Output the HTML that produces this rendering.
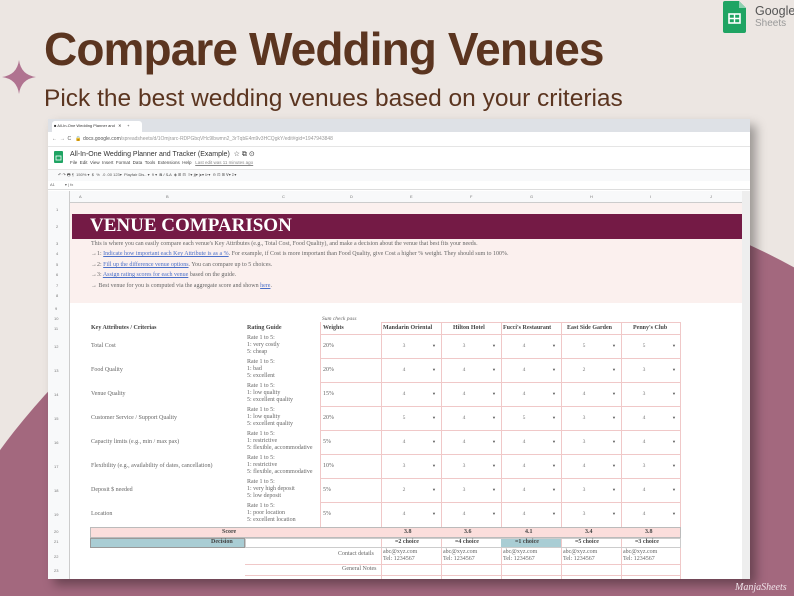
<!DOCTYPE html>
<html><head><meta charset="utf-8"><style>
*{margin:0;padding:0;box-sizing:border-box}
html,body{width:794px;height:596px;overflow:hidden}
body{background:#ece6e2;position:relative;font-family:"Liberation Serif",serif}
.clip{position:absolute;left:0;top:0;width:794px;height:596px;overflow:hidden}
.blob{position:absolute;left:-129px;top:191px;width:1258px;height:1318px;border-radius:50%;background:#a3687e}
.a{position:absolute;white-space:nowrap}
.t{left:44px;top:22px;font:bold 46px "Liberation Sans",sans-serif;color:#5b3520;letter-spacing:-0.9px}
.s{left:44px;top:85px;font:24.5px "Liberation Sans",sans-serif;color:#5b3520}
.win{position:absolute;left:48px;top:119px;width:702px;height:460px;background:#fff;box-shadow:6px 6px 10px rgba(0,0,0,.35);overflow:hidden}
.c{position:absolute;font-size:6px;color:#666;white-space:nowrap;line-height:7px}
.v{position:absolute;font-size:5.5px;color:#777;text-align:center;width:40px;line-height:24px}
.ar{position:absolute;font-size:4px;color:#555;line-height:24px}
.hr{position:absolute;height:1px;background:#f0c8c8}
.vr{position:absolute;width:1px;background:#f0c8c8}
.rn{position:absolute;font:4px "Liberation Sans",sans-serif;color:#777}
</style></head><body>
<div class="clip"><div class="blob"></div></div>
<svg class="a" style="left:2px;top:60px" width="34" height="34" viewBox="0 0 34 34"><path d="M17 0 Q19 15 34 17 Q19 19 17 34 Q15 19 0 17 Q15 15 17 0Z" fill="#b07390"/></svg>
<div class="a t">Compare Wedding Venues</div>
<div class="a s">Pick the best wedding venues based on your criterias</div>
<svg class="a" style="left:723px;top:1px" width="24" height="32"><path d="M2 0h14l7 7v23a2 2 0 0 1-2 2H2a2 2 0 0 1-2-2V2a2 2 0 0 1 2-2z" fill="#1fa463"/><path d="M16 0v7h7z" fill="#8ed1b1"/><rect x="6" y="13" width="11" height="9" fill="none" stroke="#fff" stroke-width="1.6"/><path d="M6 17.5h11M11.5 13v9" stroke="#fff" stroke-width="1.4"/></svg>
<div class="a" style="left:755px;top:4px;font:12.5px 'Liberation Sans',sans-serif;color:#555">Google</div>
<div class="a" style="left:755px;top:18px;font:10px 'Liberation Sans',sans-serif;color:#999">Sheets</div>

<div class="win">
 <div style="position:absolute;left:0;top:0;width:702px;height:13px;background:#dee1e6"></div>
 <div style="position:absolute;left:4px;top:2px;width:90px;height:11px;background:#fff;border-radius:3px 3px 0 0"></div>
 <div class="c" style="left:6px;top:4px;font:4px 'Liberation Sans';color:#333">■ All-In-One Wedding Planner and &nbsp;&nbsp;✕ &nbsp;&nbsp;&nbsp;&nbsp;+</div>
 <div class="c" style="left:0;top:13px;width:702px;height:15px;background:#fff;border-bottom:1px solid #e5e5e5"></div>
 <div class="c" style="left:4px;top:17px;font:5px 'Liberation Sans';color:#555">← &nbsp;→ &nbsp;C &nbsp;&nbsp;🔒 docs.google.com<span style="color:#999">/spreadsheets/d/1Omjrarc-RDPGbqVHc9lbwmn2_3rTqbE4m9v3HCQgkY/edit#gid=1947943848</span></div>
 <svg style="position:absolute;left:6px;top:32px" width="9" height="12"><rect width="9" height="12" rx="1" fill="#1fa463"/><rect x="2" y="5" width="5" height="4" fill="none" stroke="#fff" stroke-width=".8"/></svg>
 <div class="c" style="left:22px;top:31px;font:7px 'Liberation Sans';color:#333">All-In-One Wedding Planner and Tracker (Example) &nbsp;☆ ⧉ ⊙</div>
 <div class="c" style="left:22px;top:41px;font:4.5px 'Liberation Sans';color:#444">File &nbsp;Edit &nbsp;View &nbsp;Insert &nbsp;Format &nbsp;Data &nbsp;Tools &nbsp;Extensions &nbsp;Help &nbsp;&nbsp;<u style="color:#888">Last edit was 11 minutes ago</u></div>
 <div style="position:absolute;left:0;top:50px;width:702px;height:12px;background:#f8f9fa;border-top:1px solid #e5e5e5"></div>
 <div class="c" style="left:10px;top:53px;font:4px 'Liberation Sans';color:#555">↶ ↷ 🖶 ¶ &nbsp;150% ▾ &nbsp;$ &nbsp;% &nbsp;.0 .00 123▾ &nbsp;Playfair Dis.. ▾ &nbsp;9 ▾ &nbsp;<b>B</b> <i>I</i> S̶ A &nbsp;◈ ⊞ ⊟ &nbsp;≡▾ ⫫▾ |▸▾ ⊳▾ &nbsp;⊖ ⊡ ⊞ ∀▾ Σ▾</div>
 <div style="position:absolute;left:0;top:62px;width:702px;height:9px;border-bottom:1px solid #ddd;background:#fff"></div>
 <div class="c" style="left:2px;top:63px;font:4px 'Liberation Sans'">A1 &nbsp;&nbsp;&nbsp;&nbsp;&nbsp;&nbsp;&nbsp;&nbsp;▾ | fx</div>
 <div style="position:absolute;left:0;top:72px;width:702px;height:12px;background:#f8f9fa;border-bottom:1px solid #ccc"></div>
 <div style="position:absolute;left:0;top:72px;width:22px;height:388px;background:#f8f9fa;border-right:1px solid #ccc"></div>
 <div class="rn" style="top:75px;left:31px">A</div>
 <div class="rn" style="top:75px;left:118px">B</div>
 <div class="rn" style="top:75px;left:234px">C</div>
 <div class="rn" style="top:75px;left:302px">D</div>
 <div class="rn" style="top:75px;left:362px">E</div>
 <div class="rn" style="top:75px;left:422px">F</div>
 <div class="rn" style="top:75px;left:482px">G</div>
 <div class="rn" style="top:75px;left:542px">H</div>
 <div class="rn" style="top:75px;left:602px">I</div>
 <div class="rn" style="top:75px;left:662px">J</div>
 <div style="position:absolute;left:22px;top:84px;width:672px;height:100px;background:#fbf0ee"></div>
 <div style="position:absolute;left:24px;top:95px;width:670px;height:25px;background:#741a45"></div>
 <div class="c" style="left:42px;top:97px;font:bold 19px 'Liberation Serif',serif;color:#fff;line-height:20px">VENUE COMPARISON</div>
 <div class="c" style="left:43px;top:122px">This is where you can easily compare each venue's Key Attributes (e.g., Total Cost, Food Quality), and make a decision about the venue that best fits your needs.</div>
 <div class="c" style="left:43px;top:132px">→1: <u style="color:#4a6fc8">Indicate how important each Key Attribute is as a %</u>. For example, if Cost is more important than Food Quality, give Cost a higher % weight. They should sum to 100%.</div>
 <div class="c" style="left:43px;top:143px">→2: <u style="color:#4a6fc8">Fill up the difference venue options</u>. You can compare up to 5 choices.</div>
 <div class="c" style="left:43px;top:153px">→3: <u style="color:#4a6fc8">Assign rating scores for each venue</u> based on the guide.</div>
 <div class="c" style="left:43px;top:164px">→ Best venue for you is computed via the aggregate score and shown <u style="color:#4a6fc8">here</u>.</div>
 <div class="rn" style="left:8px;top:88px">1</div>
 <div class="rn" style="left:8px;top:105px">2</div>
 <div class="rn" style="left:8px;top:122px">3</div>
 <div class="rn" style="left:8px;top:132px">4</div>
 <div class="rn" style="left:8px;top:143px">5</div>
 <div class="rn" style="left:8px;top:153px">6</div>
 <div class="rn" style="left:8px;top:164px">7</div>
 <div class="rn" style="left:8px;top:174px">8</div>
 <div class="rn" style="left:7px;top:187px">9</div>
 <div class="rn" style="left:6px;top:197px">10</div>
 <div class="rn" style="left:6px;top:207px">11</div>
 <div class="rn" style="left:6px;top:225px">12</div>
 <div class="rn" style="left:6px;top:249px">13</div>
 <div class="rn" style="left:6px;top:273px">14</div>
 <div class="rn" style="left:6px;top:297px">15</div>
 <div class="rn" style="left:6px;top:321px">16</div>
 <div class="rn" style="left:6px;top:345px">17</div>
 <div class="rn" style="left:6px;top:369px">18</div>
 <div class="rn" style="left:6px;top:393px">19</div>
 <div class="rn" style="left:6px;top:410px">20</div>
 <div class="rn" style="left:6px;top:420px">21</div>
 <div class="rn" style="left:6px;top:435px">22</div>
 <div class="rn" style="left:6px;top:449px">23</div>
 <div class="c" style="left:274px;top:197px;font-style:italic;font-size:5.5px">Sum check pass</div>
 <div class="c" style="left:43px;top:206px;font-weight:bold;color:#444">Key Attributes / Criterias</div>
 <div class="c" style="left:199px;top:206px;font-weight:bold;color:#444">Rating Guide</div>
 <div class="c" style="left:275px;top:206px;font-weight:bold;color:#444">Weights</div>
 <div class="hr" style="left:333px;top:203px;width:300px"></div>
 <div class="hr" style="left:272px;top:215px;width:361px"></div>
 <div class="hr" style="left:272px;top:239px;width:361px"></div>
 <div class="hr" style="left:272px;top:263px;width:361px"></div>
 <div class="hr" style="left:272px;top:287px;width:361px"></div>
 <div class="hr" style="left:272px;top:311px;width:361px"></div>
 <div class="hr" style="left:272px;top:335px;width:361px"></div>
 <div class="hr" style="left:272px;top:359px;width:361px"></div>
 <div class="hr" style="left:272px;top:383px;width:361px"></div>
 <div class="vr" style="left:272px;top:203px;height:205px"></div>
 <div class="vr" style="left:333px;top:203px;height:268px"></div>
 <div class="vr" style="left:393px;top:203px;height:268px"></div>
 <div class="vr" style="left:453px;top:203px;height:268px"></div>
 <div class="vr" style="left:513px;top:203px;height:268px"></div>
 <div class="vr" style="left:573px;top:203px;height:268px"></div>
 <div class="vr" style="left:632px;top:203px;height:268px"></div>
 <div class="c" style="left:335px;top:206px;font-weight:bold;color:#444">Mandarin Oriental</div>
 <div class="c" style="left:405px;top:206px;font-weight:bold;color:#444">Hilton Hotel</div>
 <div class="c" style="left:455px;top:206px;font-weight:bold;color:#444">Fucci's Restaurant</div>
 <div class="c" style="left:519px;top:206px;font-weight:bold;color:#444">East Side Garden</div>
 <div class="c" style="left:585px;top:206px;font-weight:bold;color:#444">Penny's Club</div>

 <div class="c" style="left:43px;top:224px">Total Cost</div>
 <div class="c" style="left:199px;top:216px">Rate 1 to 5:<br>1: very costly<br>5: cheap</div>
 <div class="c" style="left:275px;top:224px">20%</div>
 <div class="c" style="left:43px;top:248px">Food Quality</div>
 <div class="c" style="left:199px;top:240px">Rate 1 to 5:<br>1: bad<br>5: excellent</div>
 <div class="c" style="left:275px;top:248px">20%</div>
 <div class="c" style="left:43px;top:272px">Venue Quality</div>
 <div class="c" style="left:199px;top:264px">Rate 1 to 5:<br>1: low quality<br>5: excellent quality</div>
 <div class="c" style="left:275px;top:272px">15%</div>
 <div class="c" style="left:43px;top:296px">Customer Service / Support Quality</div>
 <div class="c" style="left:199px;top:288px">Rate 1 to 5:<br>1: low quality<br>5: excellent quality</div>
 <div class="c" style="left:275px;top:296px">20%</div>
 <div class="c" style="left:43px;top:320px">Capacity limits (e.g., min / max pax)</div>
 <div class="c" style="left:199px;top:312px">Rate 1 to 5:<br>1: restrictive<br>5: flexible, accommodative</div>
 <div class="c" style="left:275px;top:320px">5%</div>
 <div class="c" style="left:43px;top:344px">Flexibility (e.g., availability of dates, cancellation)</div>
 <div class="c" style="left:199px;top:336px">Rate 1 to 5:<br>1: restrictive<br>5: flexible, accommodative</div>
 <div class="c" style="left:275px;top:344px">10%</div>
 <div class="c" style="left:43px;top:368px">Deposit $ needed</div>
 <div class="c" style="left:199px;top:360px">Rate 1 to 5:<br>1: very high deposit<br>5: low deposit</div>
 <div class="c" style="left:275px;top:368px">5%</div>
 <div class="c" style="left:43px;top:392px">Location</div>
 <div class="c" style="left:199px;top:384px">Rate 1 to 5:<br>1: poor location<br>5: excellent location</div>
 <div class="c" style="left:275px;top:392px">5%</div>

 <div class="v" style="left:336px;top:215px">3<br>4<br>4<br>5<br>4<br>3<br>2<br>4</div>
 <div class="v" style="left:396px;top:215px">3<br>4<br>4<br>4<br>4<br>3<br>3<br>4</div>
 <div class="v" style="left:456px;top:215px">4<br>4<br>4<br>5<br>4<br>4<br>4<br>4</div>
 <div class="v" style="left:516px;top:215px">5<br>2<br>4<br>3<br>3<br>4<br>3<br>3</div>
 <div class="v" style="left:576px;top:215px">5<br>3<br>3<br>4<br>4<br>3<br>4<br>4</div>
 <div class="ar" style="left:384px;top:215px">▼<br>▼<br>▼<br>▼<br>▼<br>▼<br>▼<br>▼</div>
 <div class="ar" style="left:444px;top:215px">▼<br>▼<br>▼<br>▼<br>▼<br>▼<br>▼<br>▼</div>
 <div class="ar" style="left:504px;top:215px">▼<br>▼<br>▼<br>▼<br>▼<br>▼<br>▼<br>▼</div>
 <div class="ar" style="left:564px;top:215px">▼<br>▼<br>▼<br>▼<br>▼<br>▼<br>▼<br>▼</div>
 <div class="ar" style="left:624px;top:215px">▼<br>▼<br>▼<br>▼<br>▼<br>▼<br>▼<br>▼</div>

 <div style="position:absolute;left:42px;top:408px;width:591px;height:11px;background:#fbdedc;border:1px solid #bbb"></div>
 <div style="position:absolute;left:42px;top:419px;width:155px;height:10px;background:#a9cdd4;border:1px solid #999"></div>
 <div style="position:absolute;left:453px;top:419px;width:60px;height:10px;background:#a9cdd4"></div>
 <div style="position:absolute;left:197px;top:419px;width:436px;height:10px;border:1px solid #ccc"></div>
 <div class="c" style="left:174px;top:410px;font-weight:bold;color:#444">Score</div>
 <div class="c" style="left:163px;top:420px;font-weight:bold;color:#444">Decision</div>
 <div class="c" style="left:356px;top:410px;font-weight:bold;color:#444">3.8</div><div class="c" style="left:416px;top:410px;font-weight:bold;color:#444">3.6</div><div class="c" style="left:477px;top:410px;font-weight:bold;color:#444">4.1</div><div class="c" style="left:537px;top:410px;font-weight:bold;color:#444">3.4</div><div class="c" style="left:597px;top:410px;font-weight:bold;color:#444">3.8</div>
 <div class="c" style="left:347px;top:420px;font-weight:bold;color:#444">=2 choice</div><div class="c" style="left:407px;top:420px;font-weight:bold;color:#444">=4 choice</div><div class="c" style="left:467px;top:420px;font-weight:bold;color:#444">=1 choice</div><div class="c" style="left:527px;top:420px;font-weight:bold;color:#444">=5 choice</div><div class="c" style="left:587px;top:420px;font-weight:bold;color:#444">=3 choice</div>
 <div class="c" style="left:290px;top:432px">Contact details</div>
 <div class="c" style="left:294px;top:447px">General Notes</div>
 <div class="c" style="left:335px;top:430px">abc@xyz.com<br>Tel: 1234567</div>
 <div class="c" style="left:395px;top:430px">abc@xyz.com<br>Tel: 1234567</div>
 <div class="c" style="left:455px;top:430px">abc@xyz.com<br>Tel: 1234567</div>
 <div class="c" style="left:515px;top:430px">abc@xyz.com<br>Tel: 1234567</div>
 <div class="c" style="left:575px;top:430px">abc@xyz.com<br>Tel: 1234567</div>
 <div class="hr" style="left:197px;top:445px;width:436px"></div>
 <div class="hr" style="left:197px;top:456px;width:436px"></div>
 <div style="position:absolute;left:694px;top:72px;width:8px;height:388px;background:#eee"></div>
</div>
<div class="a" style="left:735px;top:582px;font:italic 10px 'Liberation Serif';color:#f0e4ea">ManjaSheets</div>
</body></html>
